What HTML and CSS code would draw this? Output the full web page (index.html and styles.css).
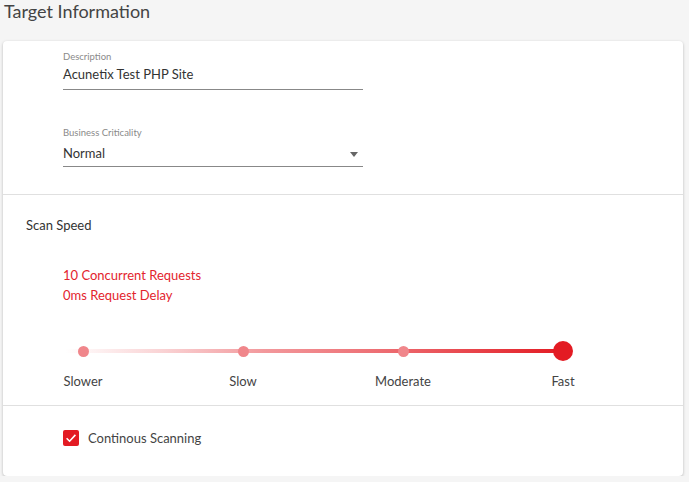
FILE: index.html
```html
<!DOCTYPE html>
<html>
<head>
<meta charset="utf-8">
<link rel="stylesheet" href="styles.css">
</head>
<body>
<h1 class="title">Target Information</h1>
<div class="card">
  <section class="section fields">
    <div class="field">
      <div class="label">Description</div>
      <div class="input">Acunetix Test PHP Site</div>
    </div>
    <div class="field field-select">
      <div class="label">Business Criticality</div>
      <div class="input select">Normal<span class="caret"></span></div>
    </div>
  </section>
  <section class="section speed">
    <div class="speed-title">Scan Speed</div>
    <div class="speed-info">
      <div>10 Concurrent Requests</div>
      <div>0ms Request Delay</div>
    </div>
    <div class="slider">
      <div class="track"></div>
      <div class="stop"><span class="dot-wrap"><span class="dot"></span></span><span class="stop-label">Slower</span></div>
      <div class="stop"><span class="dot-wrap"><span class="dot"></span></span><span class="stop-label">Slow</span></div>
      <div class="stop"><span class="dot-wrap"><span class="dot"></span></span><span class="stop-label">Moderate</span></div>
      <div class="stop"><span class="dot-wrap"><span class="dot thumb"></span></span><span class="stop-label">Fast</span></div>
    </div>
  </section>
  <section class="section scanning">
    <label class="check">
      <span class="box"><svg width="16" height="16" viewBox="0 0 16 16"><path d="M3.6 8.2 L6.6 11.2 L12.4 4.9" fill="none" stroke="#fff" stroke-width="1.6"/></svg></span>
      <span class="check-label">Continous Scanning</span>
    </label>
  </section>
</div>
</body>
</html>
```

FILE: styles.css
```css
* { box-sizing: border-box; }
body {
  margin: 0;
  background: #f5f5f5;
  font-family: "Lato", "Open Sans", sans-serif;
  color: #333;
}
.title {
  margin: 0;
  padding: 0 0 0 4px;
  height: 41px;
  font-size: 18px;
  font-weight: 400;
  line-height: 22px;
  color: #444;
}
.card {
  margin-left: 3px;
  width: 680px;
  height: 435px;
  background: #fff;
  border-radius: 4px;
  box-shadow: 0 1px 3px rgba(0,0,0,0.25);
  display: flex;
  flex-direction: column;
}
.section { border-bottom: 1px solid #e0e0e0; }
.section:last-child { border-bottom: none; }
.fields {
  height: 154px;
  padding: 10px 0 0 60px;
}
.field { width: 300px; }
.field-select { margin-top: 37px; }
.label {
  font-size: 9.5px;
  color: #8a8a8a;
  line-height: 12px;
}
.input {
  font-size: 13px;
  line-height: 16px;
  padding: 3px 0 7px;
  border-bottom: 1px solid #888;
  color: #333;
}
.select {
  position: relative;
  padding: 6px 0 5px;
}
.caret {
  position: absolute;
  right: 5px;
  top: 13px;
  width: 0;
  height: 0;
  border-left: 4.5px solid transparent;
  border-right: 4.5px solid transparent;
  border-top: 5px solid #666;
}
.speed {
  height: 211px;
  padding: 22px 0 0 0;
}
.speed-title {
  padding-left: 23px;
  font-size: 13px;
  line-height: 16px;
  color: #333;
}
.speed-info {
  margin-top: 32px;
  padding-left: 60px;
  font-size: 13px;
  line-height: 20px;
  color: #e3242d;
}
.slider {
  position: relative;
  margin-top: 36px;
  margin-left: 60px;
  display: grid;
  grid-template-columns: repeat(4, 40px);
  column-gap: 120px;
}
.track {
  position: absolute;
  left: 2px;
  width: 498px;
  top: 8px;
  height: 4px;
  background: linear-gradient(to right, rgba(227,27,35,0) 0%, rgba(227,27,35,0.2) 20%, rgba(227,27,35,0.45) 40%, rgba(227,27,35,0.65) 65%, #e31b23 100%);
}
.stop {
  position: relative;
  display: flex;
  flex-direction: column;
  align-items: center;
}
.dot-wrap {
  height: 20px;
  display: flex;
  align-items: center;
  justify-content: center;
}
.dot {
  display: block;
  width: 11px;
  height: 11px;
  border-radius: 50%;
  background: #f0868b;
}
.dot.thumb {
  width: 20px;
  height: 20px;
  background: #e31b23;
}
.stop-label {
  margin-top: 12px;
  font-size: 13px;
  line-height: 16px;
  color: #444;
  white-space: nowrap;
}
.scanning {
  flex: 1;
  padding: 24px 0 0 60px;
}
.check {
  display: flex;
  align-items: center;
  gap: 9px;
}
.box {
  width: 16px;
  height: 16px;
  border-radius: 2px;
  background: #e31b23;
  display: flex;
}
.check-label {
  font-size: 13px;
  line-height: 16px;
  color: #444;
}
```
